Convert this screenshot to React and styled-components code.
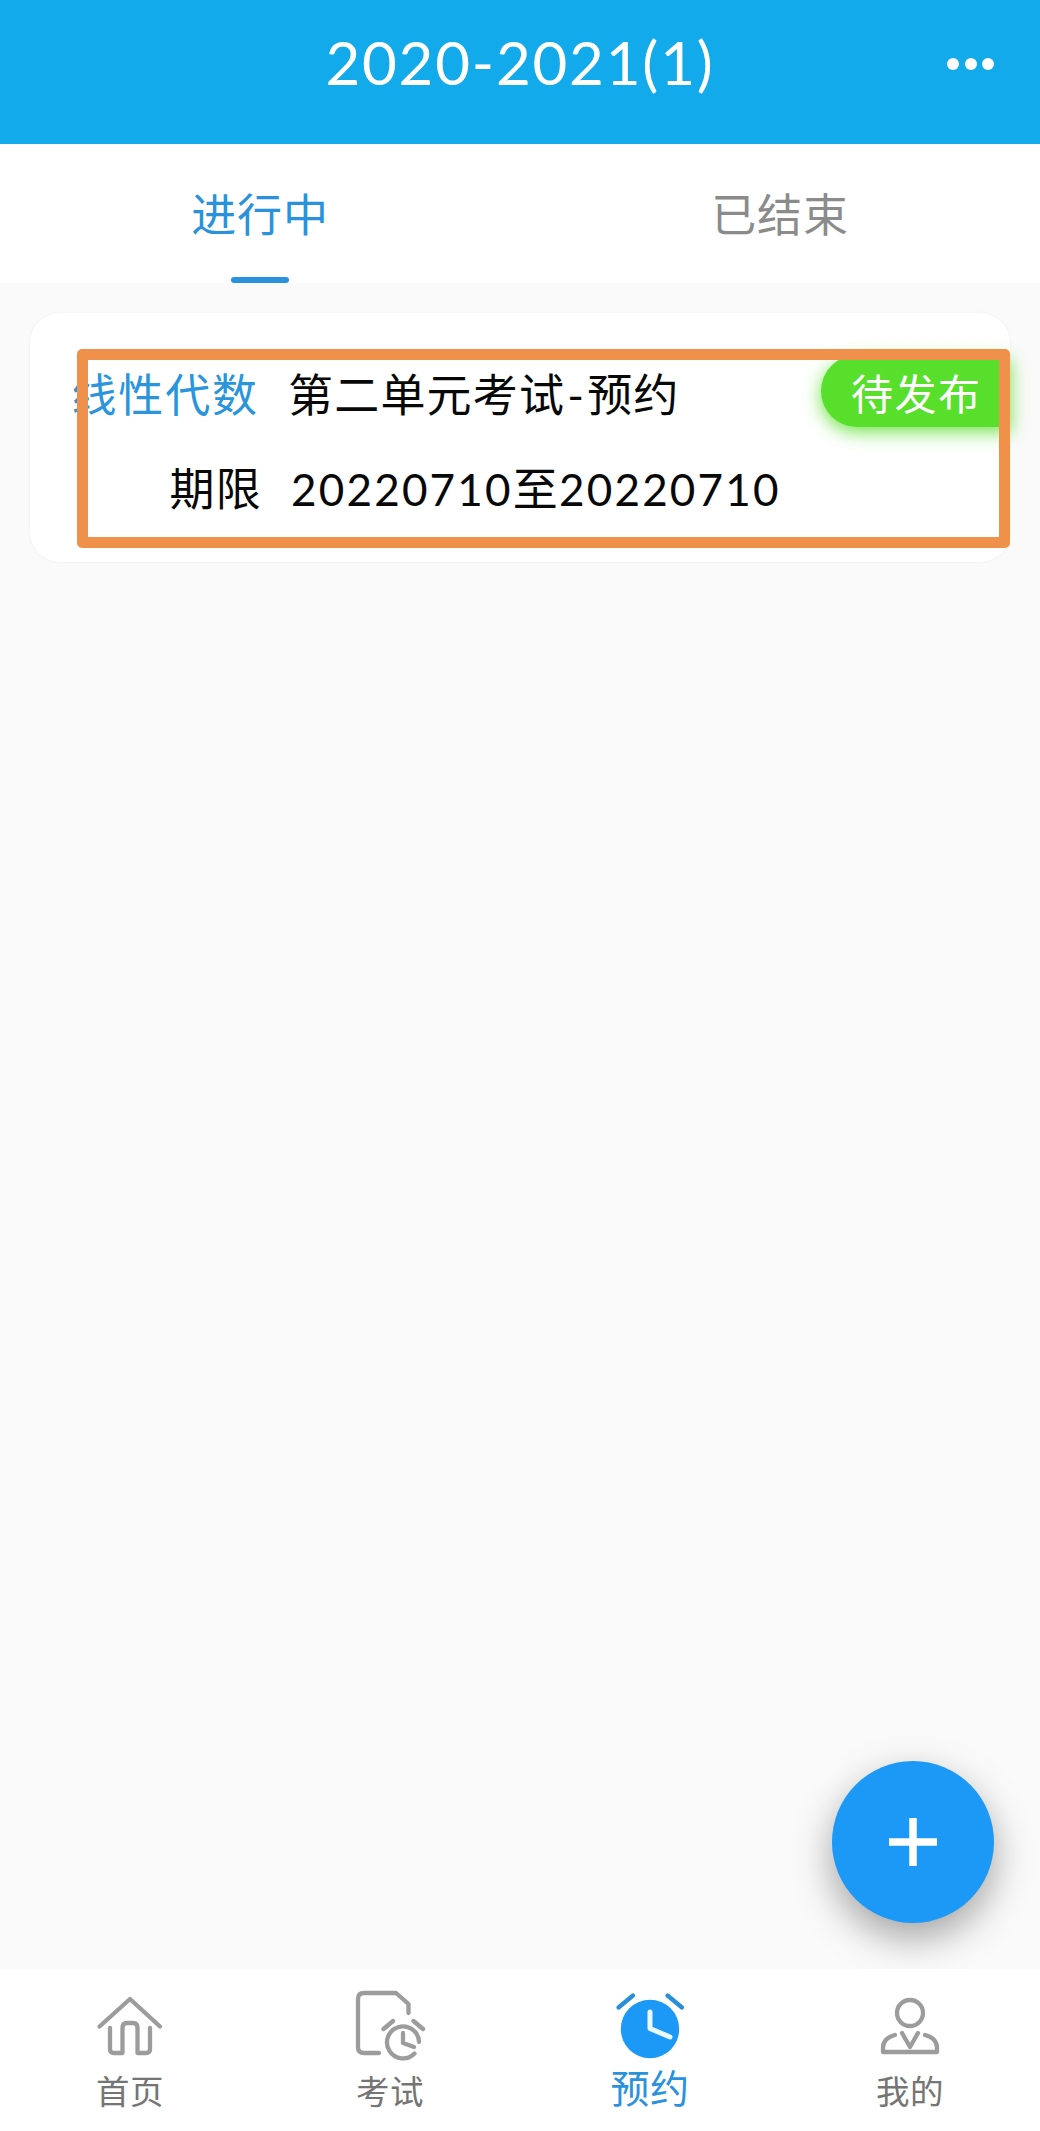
import styled, { createGlobalStyle } from "styled-components"

const GlobalStyle = createGlobalStyle`
  * {
    box-sizing: border-box;
  }
  body {
    margin: 0;
    background-color: #fafafa;
    font-family: Lato, "Noto Sans CJK SC", sans-serif;
  }
`
const Container = styled.div`
  height: 2131px;
  display: flex;
  flex-direction: column;
  position: relative;
  overflow: hidden;
`
const Header = styled.header`
  height: 144px;
  flex-shrink: 0;
  padding-bottom: 21px;
  display: grid;
  grid-template-columns: 1fr auto 1fr;
  align-items: center;
  background-color: #13aaeb;
  color: white;
`
const Title = styled.h1`
  grid-column: 2;
  margin: 0;
  font-size: 60px;
  font-weight: 400;
  line-height: 80px;
  letter-spacing: 1.8px;
  white-space: nowrap;
`
const More = styled.div`
  display: flex;
  justify-content: flex-end;
  gap: 5.3px;
  padding: 4px 46px 0 0;
`
const Dot = styled.span`
  width: 12px;
  height: 12px;
  border-radius: 50%;
  background-color: white;
`
const Tabs = styled.nav`
  height: 139px;
  flex-shrink: 0;
  display: flex;
  background-color: white;
`
const Tab = styled.div`
  flex: 1;
  display: flex;
  flex-direction: column;
  align-items: center;
  justify-content: space-between;
  padding-top: 39px;
  font-size: 45px;
  line-height: 64px;
  letter-spacing: 0.8px;
  color: ${props => props.$active ? "#2a92dc" : "#8b8b8b"};
`
const TabLine = styled.span`
  width: 58px;
  height: 6px;
  border-radius: 3px;
  background-color: #2a92dc;
`
const Content = styled.main`
  flex: 1;
  padding: 30px;
`
const Card = styled.div`
  height: 249px;
  padding: 37px 0 0 44px;
  border-radius: 30px;
  background-color: white;
  box-shadow: 0 0 3px rgba(0, 0, 0, 0.06);
  position: relative;
`
const Row = styled.div`
  display: flex;
  align-items: center;
  height: ${props => props.$height};
  font-size: 45px;
  line-height: 64px;
  letter-spacing: 1.2px;
  white-space: nowrap;
  color: #080808;
`
const Label = styled.span`
  width: ${props => props.$link ? "185px" : "188px"};
  padding-top: 8px;
  margin-right: 29px;
  display: flex;
  justify-content: flex-end;
  letter-spacing: ${props => props.$link ? "1.9px" : "1.2px"};
  color: ${props => props.$link ? "#2a95dd" : "inherit"};
`
const Value = styled.span`
  flex: 1;
  padding-top: 8px;
`
const Dash = styled.span`
  margin: 0 2px;
`
const Digits = styled.span`
  font-size: 44px;
  letter-spacing: 2.2px;
`
const Tag = styled.span`
  width: 189px;
  height: 72px;
  padding-left: 30px;
  border-radius: 36px 0 0 36px;
  background-color: #58df2c;
  box-shadow: 0 5px 18px rgba(88, 223, 44, 0.85);
  font-size: 42px;
  line-height: 78px;
  letter-spacing: 1.5px;
  color: white;
`
/* highlight drawn over the card content */
const Highlight = styled.div`
  position: absolute;
  top: 36px;
  right: 0;
  bottom: 14px;
  left: 47px;
  border: 11px solid #f0914b;
  border-radius: 5px;
`
const AddButton = styled.button`
  position: absolute;
  right: 46px;
  bottom: 208px;
  width: 162px;
  height: 162px;
  padding: 0;
  border: 0;
  border-radius: 50%;
  background-color: #1c98f7;
  box-shadow: 0 15px 38px rgba(0, 0, 0, 0.35);

  svg {
    display: block;
    margin: 0 auto;
  }
`
const BottomBar = styled.footer`
  height: 162px;
  flex-shrink: 0;
  display: flex;
  background-color: white;
  position: relative;
`
const BarItem = styled.div`
  flex: 1;
  display: flex;
  flex-direction: column;
  align-items: center;
  padding-top: 19px;
  font-size: ${props => props.$active ? "39px" : "33.5px"};
  line-height: ${props => props.$active ? "52px" : "58px"};
  letter-spacing: 0.5px;
  color: ${props => props.$active ? "#2a92dc" : "#757575"};
`
const Icon = styled.svg`
  width: 80px;
  height: 74px;
  fill: none;
  stroke: ${props => props.$active ? "#2a8fd8" : "#9c9c9c"};
  stroke-width: 4.3;
  stroke-linecap: round;
  stroke-linejoin: round;
`

const HomeIcon = () => (
  <Icon viewBox="0 0 80 74">
    <path d="M9.500 38.500L40 11L70 38.500" />
    <path d="M20 40V61Q20 65 24 65H32.500V40Q32.500 35 37 35H43Q47.500 35 47.500 40V65H56Q60 65 60 61V40" />
  </Icon>
)

const ExamIcon = () => (
  <Icon viewBox="0 0 80 74">
    <path d="M29 65H14Q8 65 8 59V11Q8 5 14 5H46L58.500 16V25" />
    <path d="M69 54A16 16 0 1 0 64.500 65.500" />
    <path d="M53 45V55L64 59M33.500 41L43 33M63.500 33L73 41" />
  </Icon>
)

const ClockIcon = () => (
  <Icon viewBox="0 0 80 74" $active>
    <circle cx="40" cy="41" r="29.200" fill="#1c98f7" stroke="none" />
    <path d="M8.500 19.500L23 7.500M57.500 7.500L72 19.500" />
    <path d="M40 24V40.500L60 49" stroke="#e9fbff" strokeWidth="5" />
  </Icon>
)

const MineIcon = () => (
  <Icon viewBox="0 0 80 74">
    <circle cx="40" cy="25" r="13" />
    <path d="M25 47Q13 50 13 60V64H67V60Q67 50 55 47" />
    <path d="M32 45L40 59L48 45" />
  </Icon>
)

const App = () => {
  return (
    <Container>
      <GlobalStyle />
      <Header>
        <Title>2020-2021(1)</Title>
        <More>
          <Dot />
          <Dot />
          <Dot />
        </More>
      </Header>
      <Tabs>
        <Tab $active>进行中<TabLine /></Tab>
        <Tab>已结束</Tab>
      </Tabs>
      <Content>
        <Card>
          <Row $height="82px">
            <Label $link>线性代数</Label>
            <Value>第二单元考试<Dash>-</Dash>预约</Value>
            <Tag>待发布</Tag>
          </Row>
          <Row $height="106px">
            <Label>期限</Label>
            <Value><Digits>20220710</Digits>至<Digits>20220710</Digits></Value>
          </Row>
          <Highlight />
        </Card>
      </Content>
      <AddButton aria-label="add">
        <svg width="48" height="48" viewBox="0 0 48 48" stroke="white" strokeWidth="7.500">
          <path d="M24 0V48M0 24H48" />
        </svg>
      </AddButton>
      <BottomBar>
        <BarItem><HomeIcon />首页</BarItem>
        <BarItem><ExamIcon />考试</BarItem>
        <BarItem $active><ClockIcon />预约</BarItem>
        <BarItem><MineIcon />我的</BarItem>
      </BottomBar>
    </Container>
  )
}

export default App
